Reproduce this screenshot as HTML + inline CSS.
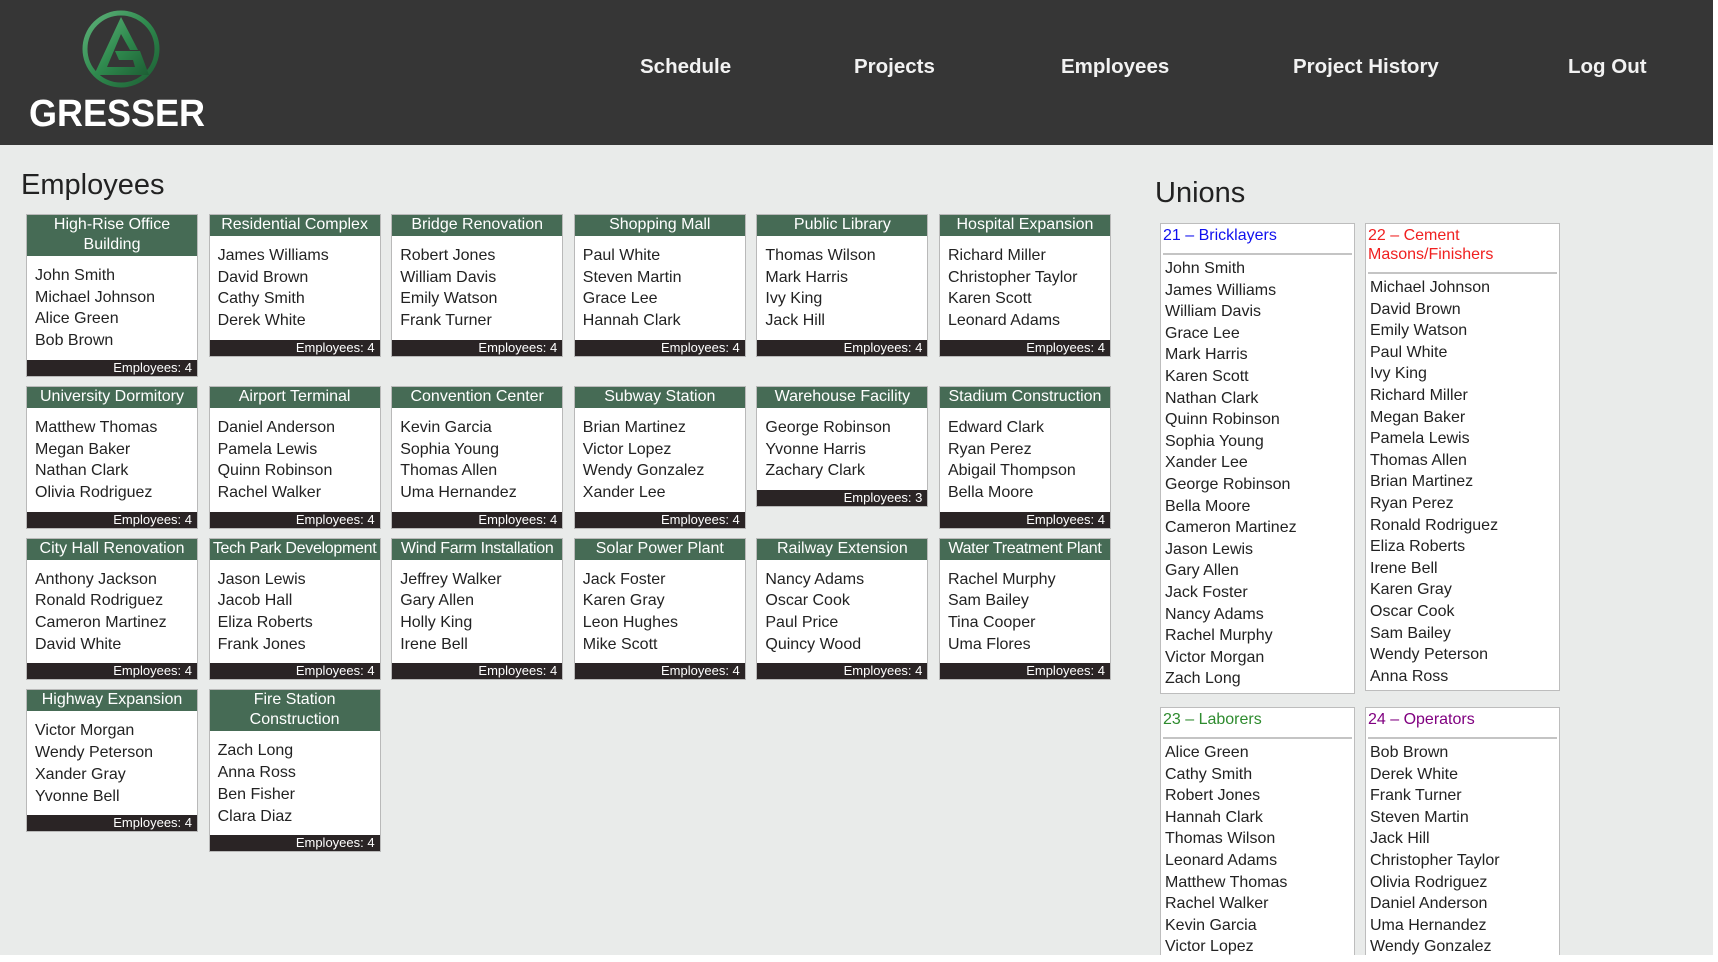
<!DOCTYPE html>
<html><head><meta charset="utf-8"><style>
*{box-sizing:border-box;margin:0;padding:0}
body{width:1718px;height:962px;background:#fff;font-family:"Liberation Sans",sans-serif;overflow:hidden;position:relative}
#page{position:absolute;left:0;top:0;width:1713px;height:955px;background:#e9ebea;overflow:hidden}
#hdr{position:absolute;left:0;top:0;width:1713px;height:145px;background:#363636}
.nav{position:absolute;top:55px;color:#f2f2f2;font-weight:bold;font-size:20.5px}
h1{position:absolute;font-weight:normal;font-size:29px;color:#222}
#grid{position:absolute;left:26px;top:214px;width:1100px;display:flex;flex-wrap:wrap;column-gap:10.6px;row-gap:9px;align-items:flex-start}
.card{width:172px;border:1px solid #b9b9b9;background:#fff}
.ch{background:#466b55;color:#fff;text-align:center;font-size:16px;line-height:20px;padding:0 2px 1px}
.cb{padding:9px 8px 8px;font-size:16px;line-height:21.7px;color:#222}
.cf{background:#2a2425;color:#fff;font-size:13px;line-height:16px;text-align:right;padding-right:5px}
.u{position:absolute;width:195px;border:1px solid #bdbdbd;background:#fff}
.uh{font-size:16px;line-height:19px;padding:2px 2px 8px}
.ul{height:2px;background:#c4c4c4;margin:0 2px}
.ub{padding:3px 4px 3px;font-size:16px;line-height:21.6px;color:#222}
</style></head><body><div id="page">
<div id="hdr">
<svg width="220" height="140" style="position:absolute;left:0;top:0">
<defs><linearGradient id="g" x1="0" y1="0" x2="1" y2="1"><stop offset="0" stop-color="#5fb27a"/><stop offset="0.5" stop-color="#2f8a4e"/><stop offset="1" stop-color="#1d5e34"/></linearGradient></defs>
<circle cx="121" cy="49" r="36" fill="none" stroke="url(#g)" stroke-width="5"/>
<path d="M121 17 L94 75 L149 75 L140 51 L115 51 L119 60 L133 60 L135 67 L107 67 L121 34 L130 50 L138 50 Z" fill="url(#g)"/>
<text x="29" y="126" fill="#fff" font-family="Liberation Sans" font-weight="bold" font-size="38" textLength="176" lengthAdjust="spacingAndGlyphs">GRESSER</text>
</svg>
<div class="nav" style="left:640px">Schedule</div>
<div class="nav" style="left:854px">Projects</div>
<div class="nav" style="left:1061px">Employees</div>
<div class="nav" style="left:1293px">Project History</div>
<div class="nav" style="left:1568px">Log Out</div>
</div>
<h1 style="left:21px;top:169px">Employees</h1>
<div id="grid">
<div class="card"><div class="ch">High-Rise Office Building</div><div class="cb">John Smith<br>Michael Johnson<br>Alice Green<br>Bob Brown</div><div class="cf">Employees: 4</div></div>
<div class="card"><div class="ch">Residential Complex</div><div class="cb">James Williams<br>David Brown<br>Cathy Smith<br>Derek White</div><div class="cf">Employees: 4</div></div>
<div class="card"><div class="ch">Bridge Renovation</div><div class="cb">Robert Jones<br>William Davis<br>Emily Watson<br>Frank Turner</div><div class="cf">Employees: 4</div></div>
<div class="card"><div class="ch">Shopping Mall</div><div class="cb">Paul White<br>Steven Martin<br>Grace Lee<br>Hannah Clark</div><div class="cf">Employees: 4</div></div>
<div class="card"><div class="ch">Public Library</div><div class="cb">Thomas Wilson<br>Mark Harris<br>Ivy King<br>Jack Hill</div><div class="cf">Employees: 4</div></div>
<div class="card"><div class="ch">Hospital Expansion</div><div class="cb">Richard Miller<br>Christopher Taylor<br>Karen Scott<br>Leonard Adams</div><div class="cf">Employees: 4</div></div>
<div class="card"><div class="ch">University Dormitory</div><div class="cb">Matthew Thomas<br>Megan Baker<br>Nathan Clark<br>Olivia Rodriguez</div><div class="cf">Employees: 4</div></div>
<div class="card"><div class="ch">Airport Terminal</div><div class="cb">Daniel Anderson<br>Pamela Lewis<br>Quinn Robinson<br>Rachel Walker</div><div class="cf">Employees: 4</div></div>
<div class="card"><div class="ch">Convention Center</div><div class="cb">Kevin Garcia<br>Sophia Young<br>Thomas Allen<br>Uma Hernandez</div><div class="cf">Employees: 4</div></div>
<div class="card"><div class="ch">Subway Station</div><div class="cb">Brian Martinez<br>Victor Lopez<br>Wendy Gonzalez<br>Xander Lee</div><div class="cf">Employees: 4</div></div>
<div class="card"><div class="ch">Warehouse Facility</div><div class="cb">George Robinson<br>Yvonne Harris<br>Zachary Clark</div><div class="cf">Employees: 3</div></div>
<div class="card"><div class="ch">Stadium Construction</div><div class="cb">Edward Clark<br>Ryan Perez<br>Abigail Thompson<br>Bella Moore</div><div class="cf">Employees: 4</div></div>
<div class="card"><div class="ch">City Hall Renovation</div><div class="cb">Anthony Jackson<br>Ronald Rodriguez<br>Cameron Martinez<br>David White</div><div class="cf">Employees: 4</div></div>
<div class="card"><div class="ch" style="white-space:nowrap;padding:0 0 1px;letter-spacing:-0.3px">Tech Park Development</div><div class="cb">Jason Lewis<br>Jacob Hall<br>Eliza Roberts<br>Frank Jones</div><div class="cf">Employees: 4</div></div>
<div class="card"><div class="ch" style="white-space:nowrap;padding:0 0 1px;letter-spacing:-0.3px">Wind Farm Installation</div><div class="cb">Jeffrey Walker<br>Gary Allen<br>Holly King<br>Irene Bell</div><div class="cf">Employees: 4</div></div>
<div class="card"><div class="ch">Solar Power Plant</div><div class="cb">Jack Foster<br>Karen Gray<br>Leon Hughes<br>Mike Scott</div><div class="cf">Employees: 4</div></div>
<div class="card"><div class="ch">Railway Extension</div><div class="cb">Nancy Adams<br>Oscar Cook<br>Paul Price<br>Quincy Wood</div><div class="cf">Employees: 4</div></div>
<div class="card"><div class="ch" style="white-space:nowrap;padding:0 0 1px;letter-spacing:-0.3px">Water Treatment Plant</div><div class="cb">Rachel Murphy<br>Sam Bailey<br>Tina Cooper<br>Uma Flores</div><div class="cf">Employees: 4</div></div>
<div class="card"><div class="ch">Highway Expansion</div><div class="cb">Victor Morgan<br>Wendy Peterson<br>Xander Gray<br>Yvonne Bell</div><div class="cf">Employees: 4</div></div>
<div class="card"><div class="ch">Fire Station Construction</div><div class="cb">Zach Long<br>Anna Ross<br>Ben Fisher<br>Clara Diaz</div><div class="cf">Employees: 4</div></div>
</div>
<h1 style="left:1155px;top:177px">Unions</h1>
<div class="u" style="left:1160px;top:223px"><div class="uh" style="color:#1010ee">21 – Bricklayers</div><div class="ul"></div><div class="ub">John Smith<br>James Williams<br>William Davis<br>Grace Lee<br>Mark Harris<br>Karen Scott<br>Nathan Clark<br>Quinn Robinson<br>Sophia Young<br>Xander Lee<br>George Robinson<br>Bella Moore<br>Cameron Martinez<br>Jason Lewis<br>Gary Allen<br>Jack Foster<br>Nancy Adams<br>Rachel Murphy<br>Victor Morgan<br>Zach Long</div></div>
<div class="u" style="left:1365px;top:223px"><div class="uh" style="color:#f02020">22 – Cement Masons/Finishers</div><div class="ul"></div><div class="ub">Michael Johnson<br>David Brown<br>Emily Watson<br>Paul White<br>Ivy King<br>Richard Miller<br>Megan Baker<br>Pamela Lewis<br>Thomas Allen<br>Brian Martinez<br>Ryan Perez<br>Ronald Rodriguez<br>Eliza Roberts<br>Irene Bell<br>Karen Gray<br>Oscar Cook<br>Sam Bailey<br>Wendy Peterson<br>Anna Ross</div></div>
<div class="u" style="left:1160px;top:707px"><div class="uh" style="color:#2e8b2e">23 – Laborers</div><div class="ul"></div><div class="ub">Alice Green<br>Cathy Smith<br>Robert Jones<br>Hannah Clark<br>Thomas Wilson<br>Leonard Adams<br>Matthew Thomas<br>Rachel Walker<br>Kevin Garcia<br>Victor Lopez<br>Yvonne Harris</div></div>
<div class="u" style="left:1365px;top:707px"><div class="uh" style="color:#800080">24 – Operators</div><div class="ul"></div><div class="ub">Bob Brown<br>Derek White<br>Frank Turner<br>Steven Martin<br>Jack Hill<br>Christopher Taylor<br>Olivia Rodriguez<br>Daniel Anderson<br>Uma Hernandez<br>Wendy Gonzalez<br>Abigail Thompson</div></div>
</div></body></html>
